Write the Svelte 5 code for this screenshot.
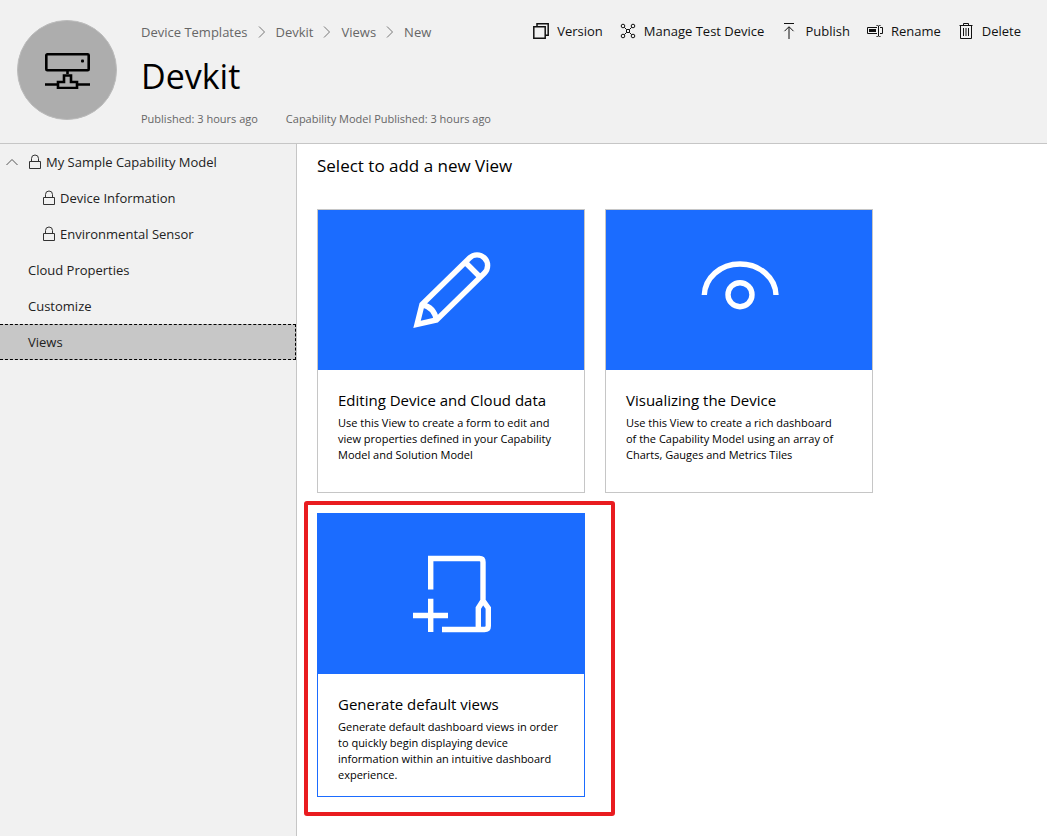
<script>
  const crumbs = ['Device Templates', 'Devkit', 'Views', 'New'];
  const actions = ['Version', 'Manage Test Device', 'Publish', 'Rename', 'Delete'];
  const nav = [
    { label: 'My Sample Capability Model', kind: 'root', lock: true },
    { label: 'Device Information', kind: 'child', lock: true },
    { label: 'Environmental Sensor', kind: 'child', lock: true },
    { label: 'Cloud Properties', kind: 'plain' },
    { label: 'Customize', kind: 'plain' },
    { label: 'Views', kind: 'plain', selected: true }
  ];
  const cards = [
    {
      icon: 'pencil',
      title: 'Editing Device and Cloud data',
      text: 'Use this View to create a form to edit and view properties defined in your Capability Model and Solution Model'
    },
    {
      icon: 'eye',
      title: 'Visualizing the Device',
      text: 'Use this View to create a rich dashboard of\u00a0the Capability Model using an array of Charts, Gauges and Metrics Tiles'
    },
    {
      icon: 'generate',
      title: 'Generate default views',
      text: 'Generate default dashboard views in order to quickly begin displaying device information within an intuitive dashboard experience.',
      active: true
    }
  ];
</script>

<div class="page">
  <header>
    <div class="avatar">
      <svg width="46" height="38" viewBox="0 0 46 38" fill="none" stroke="#000" stroke-width="2.6" aria-hidden="true">
        <rect x="2.300" y="3.300" width="42.400" height="16" rx="1" />
        <rect x="37" y="8.500" width="3" height="3" rx="1" fill="#000" stroke="none" />
        <path d="M23.500 19v4M1 33.500h13M33 33.500h13M14 37V31H20V24.500H27V31H33V37Z" />
      </svg>
    </div>
    <div class="heading">
      <div class="top">
        <nav class="crumbs" aria-label="Breadcrumb">
          {#each crumbs as crumb, i}
            {#if i > 0}
              <svg width="8" height="12" viewBox="0 0 8 12" fill="none" stroke="#777" aria-hidden="true"><path d="M1 .5 6.5 6 1 11.5" /></svg>
            {/if}
            <a href="#{crumb}">{crumb}</a>
          {/each}
        </nav>
        <div class="actions">
          {#each actions as action}
            <button>
              <svg width="16" height="16" viewBox="0 0 16 16" fill="none" stroke="#111" aria-hidden="true">
                {#if action === 'Version'}
                  <path stroke-width="1.5" d="M.8 3.8h11.4v11.4H.8ZM4 3.5V.8h11.2v11.4h-2.7" />
                {:else if action === 'Manage Test Device'}
                  <circle cx="3" cy="3" r="1.8" /><circle cx="13" cy="3" r="1.8" />
                  <circle cx="3" cy="13" r="1.8" /><circle cx="13" cy="13" r="1.8" />
                  <path d="M4.300 4.300 6.500 6.500M11.700 4.300 9.500 6.500M4.300 11.700 6.500 9.500M11.700 11.700 9.500 9.500M6.500 6.500h3v3h-3Z" />
                {:else if action === 'Publish'}
                  <path d="M3 .5h10M8 16V4M3.500 8.200 8 3.700l4.500 4.500" />
                {:else if action === 'Rename'}
                  <path d="M10 4.500H.5v6H10M13 4.500h2.500v6H13M9.500 2.500h1l1 .5 1-.5h1M9.500 13.500h1l1-.5 1 .5h1M11.500 3v10" />
                  <path stroke-width="3" d="M2 7.500h7" />
                {:else}
                  <path d="M1.500 2.500h13M5.500 2.500v-2h5v2M2.500 2.500v13h11v-13M5.500 5v8M8 5v8M10.500 5v8" />
                {/if}
              </svg>
              {action}
            </button>
          {/each}
        </div>
      </div>
      <h1>Devkit</h1>
      <div class="meta">
        <span>Published: 3 hours ago</span>
        <span>Capability Model Published: 3 hours ago</span>
      </div>
    </div>
  </header>

  <div class="body">
    <aside>
      {#each nav as item}
        <a class="item {item.kind}" class:selected={item.selected} href="#{item.label}">
          {#if item.kind === 'root'}
            <svg class="caret" width="12" height="8" viewBox="0 0 12 8" fill="none" stroke="#555" aria-hidden="true"><path d="M.5 7 6 1.500 11.500 7" /></svg>
          {/if}
          {#if item.lock}
            <svg width="12" height="16" viewBox="0 0 12 16" fill="none" stroke="#333" aria-hidden="true"><path d="M.5 7.500h11v7H.5ZM2.500 7.500V4.500a3.500 3.500 0 0 1 7 0v3" /></svg>
          {/if}
          {item.label}
        </a>
      {/each}
    </aside>

    <main>
      <h2>Select to add a new View</h2>
      <div class="cards">
        {#each cards as card}
          <button class="card" class:active={card.active}>
            <span class="art">
              <svg width="80" height="80" viewBox="0 0 80 80" fill="none" stroke="#fff" stroke-width="5.400" aria-hidden="true">
                {#if card.icon === 'pencil'}
                  <path d="M6 74.500 11 54.500 58.500 8A10.500 10.500 0 0 1 73.500 23L25.500 70ZM54.500 12.500 69 27M11 54.500Q23 57 25.500 70" />
                {:else if card.icon === 'eye'}
                  <path d="M5.300 45C6 28 21 14 41 14S76.500 28 77 45" />
                  <circle cx="41" cy="44.700" r="12" />
                {:else}
                  <path d="M19.700 35.500V4.500H68.500Q72 4.500 72 8V47M19.700 44.700V78M2 61.500H37M31 75.500H73.500Q77.300 75.500 77.300 72V54L72 46.500 67.300 54V75.500" />
                {/if}
              </svg>
            </span>
            <span class="copy">
              <span class="title">{card.title}</span>
              <span class="text">{card.text}</span>
            </span>
          </button>
        {/each}
      </div>
    </main>
  </div>
</div>

<style>
  :global(body) { margin: 0; }
  .page {
    display: flex;
    flex-direction: column;
    min-height: 100vh;
    font-family: "Open Sans", "Noto Sans", sans-serif;
    font-size: 13px;
    color: #222;
    background: #fff;
  }
  * { box-sizing: border-box; }
  a { color: inherit; text-decoration: none; }
  button { font: inherit; color: inherit; border: 0; background: none; padding: 0; cursor: pointer; }
  svg { flex: none; }

  header {
    display: flex;
    gap: 24px;
    padding: 20px 26px 16px 17px;
    background: #f1f1f1;
    border-bottom: 1px solid #c6c6c6;
  }
  .avatar {
    display: flex;
    flex: none;
    align-items: center;
    justify-content: center;
    width: 100px;
    height: 100px;
    border: 1px solid #bcbcbc;
    border-radius: 50%;
    background: #adadad;
  }
  .heading { flex: 1; min-width: 0; }
  .top { display: flex; align-items: flex-start; justify-content: space-between; height: 24px; white-space: nowrap; }
  .crumbs { display: flex; align-items: center; gap: 10px; line-height: 24px; color: #666; }
  .actions { display: flex; align-items: center; gap: 17px; }
  .actions button { display: flex; align-items: center; gap: 8px; line-height: 22px; color: #111; }
  h1 { margin: 8px 0 11px; font-size: 34px; font-weight: 400; line-height: 48px; color: #000; }
  .meta { display: flex; gap: 28px; font-size: 11px; line-height: 16px; color: #666; }

  .body { display: flex; flex: 1; }
  aside { flex: none; width: 297px; background: #f1f1f1; border-right: 1px solid #c6c6c6; }
  .item { display: flex; align-items: center; gap: 5px; height: 36px; padding-left: 28px; }
  .root { padding-left: 6px; }
  .caret { margin-right: 6px; }
  .child { padding-left: 43px; }
  .selected { background: #c7c7c7; border: 1px dashed #000; border-left: 0; }

  main { flex: 1; min-width: 0; padding: 8px 20px 20px; }
  h2 { margin: 0 0 29px; font-size: 17px; font-weight: 400; line-height: 28px; color: #000; }
  .cards { display: flex; flex-wrap: wrap; gap: 20px; }
  .card {
    position: relative;
    display: flex;
    flex-direction: column;
    width: 268px;
    min-height: 284px;
    border: 1px solid #c6c6c6;
    text-align: left;
    color: #000;
    background: #fff;
  }
  .active { border-color: #1b6cff; }
  .active::after {
    content: "";
    position: absolute;
    inset: -13px -31px -20px -14px;
    border: 4px solid #e91c20;
    border-radius: 3px;
  }
  .art { display: flex; align-items: center; justify-content: center; align-self: stretch; height: 160px; background: #1b6cff; }
  .copy { display: flex; flex-direction: column; gap: 5px; padding: 20px 16px 0 20px; }
  .title { font-size: 15px; line-height: 20px; }
  .text { font-size: 11px; line-height: 16px; }
</style>
